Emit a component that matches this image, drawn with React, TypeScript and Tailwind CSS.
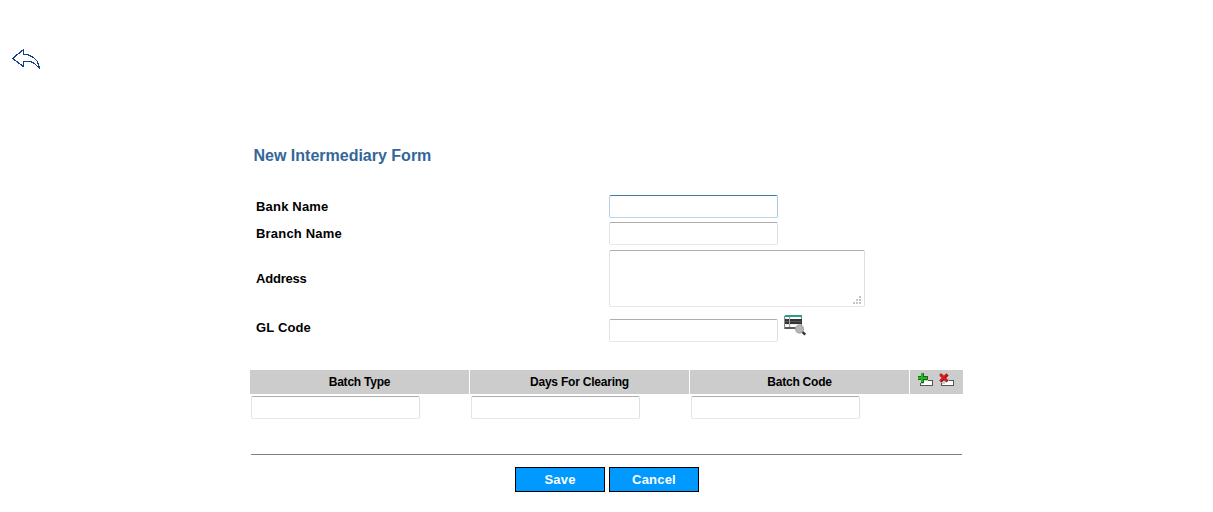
import { useState } from "react";

const field =
  "block rounded-[2px] border border-t-[#abadb3] border-r-[#dbdfe6] border-b-[#e3e9ef] border-l-[#e2e3ea] bg-white px-1 text-[13px] outline-none focus:border-t-[#3d7bad] focus:border-r-[#a4c9e3] focus:border-b-[#b7d9ed] focus:border-l-[#b5cfe7]";
const focusedField =
  "block rounded-[2px] border border-t-[#3d7bad] border-r-[#a4c9e3] border-b-[#b7d9ed] border-l-[#b5cfe7] bg-white px-1 text-[13px] outline-none";
const label = "w-[353px] shrink-0 text-[13px] leading-[15px]";
const button =
  "h-[25px] w-[90px] border border-black bg-[#0099ff] text-[13px] leading-[15px] font-bold tracking-[0.2px] text-white";

function BackIcon() {
  return (
    <svg width="30" height="22" viewBox="0 0 30 22" fill="none" stroke="#123f86" strokeWidth="1.2" shapeRendering="crispEdges">
      <path d="M1.5 10.5 L12.5 1.5 V6.5 H16.5 L22.5 9.5 L26.5 13.5 L28.5 20.5 L23.5 15.5 L19.5 13.5 H12.5 V18.5 Z" />
    </svg>
  );
}

function LookupIcon() {
  return (
    <svg width="23" height="21" viewBox="0 0 23 21">
      <path d="M0 1h18v13H0z" fill="#8a8a8a" />
      <path d="M1 2h16v11H1z" fill="#eee" />
      <path d="M1 0h17v2H1z" fill="#279b94" />
      <path d="M1 4h17v5H1z" fill="#353535" />
      <path d="M1 6h16v1H1z" fill="#555" />
      <path d="M2 2h3v2H2zM7 2h9v2H7zM2 10h3v2H2zM7 10h7v2H7z" fill="#fff" />
      <path d="M5 2h1v11H5z" fill="#a5a5a5" />
      <path d="M1 12h12v2H1z" fill="#5b5b5b" />
      <path d="m18 16.5 3.2 3.2" stroke="#303030" strokeWidth="2.4" />
      <circle cx="15.5" cy="14" r="4.2" fill="#b5b5b5" stroke="#999" strokeWidth="0.8" />
    </svg>
  );
}

function RowIcon({ remove = false }: { remove?: boolean }) {
  return (
    <svg width="16" height="14" viewBox="0 0 16 14" shapeRendering="crispEdges">
      <path d="M6 8h8v4H6zM3 11h3v1H3z" fill="#fff" />
      <path d="M2 10h1v3H2zM2 12h3v1H2zM10 7h5v1h-5zM14 7h1v5h-1zM5 12h10v1H5z" fill="#555" />
      <path d="M6 11h8v1H6z" fill="#fff" />
      {remove ? (
        <g shapeRendering="auto">
          <path d="m1.5 1.5 7 7m0-7-7 7" stroke="#8b1010" strokeWidth="3" />
          <path d="m1 1 7 7m0-7-7 7" stroke="#dc1d1d" strokeWidth="1.8" />
        </g>
      ) : (
        <g>
          <path d="M3 0h3v3h4v4H6v3H3V7H0V3h3z" fill="#136d13" />
          <path d="M3 0h2v4h4v2H5v3H3V6H0V4h3z" fill="#23b523" />
        </g>
      )}
    </svg>
  );
}

export default function App() {
  const [rows] = useState(1);
  return (
    <main className="h-[512px] w-full overflow-hidden bg-white pt-[48px] font-['Liberation_Sans',Arial,sans-serif] text-black">
      <button aria-label="Back" className="ml-[11px] block h-[22px]"><BackIcon /></button>
      <form className="ml-[250px] w-[713px] pt-[76px] font-bold" onSubmit={(e) => e.preventDefault()}>
        <h1 className="ml-[3.5px] h-[49px] text-[16px] leading-[19px] text-[#336699]">New Intermediary Form</h1>
        <div className="ml-[6px] flex h-[27px] items-start">
          <label htmlFor="bank" className={`${label} pt-[4px] tracking-[0.19px]`}>Bank Name</label>
          <input id="bank" className={`${focusedField} h-[23px] w-[169px]`} />
        </div>
        <div className="ml-[6px] flex h-[28px] items-start">
          <label htmlFor="branch" className={`${label} pt-[4px] tracking-[0.19px]`}>Branch Name</label>
          <input id="branch" className={`${field} h-[23px] w-[169px]`} />
        </div>
        <div className="ml-[6px] flex h-[65px] items-start">
          <label htmlFor="address" className={`${label} pt-[21px] tracking-[-0.2px]`}>Address</label>
          <div className="relative">
            <textarea id="address" className={`${field} h-[57px] w-[256px] resize-none`} />
            <svg className="pointer-events-none absolute right-[3px] bottom-[2px]" width="9" height="9" viewBox="0 0 9 9" shapeRendering="crispEdges">
              <path d="M6 0h2v2H6zM3 3h2v2H3zM6 3h2v2H6zM0 6h2v2H0zM3 6h2v2H3zM6 6h2v2H6z" fill="#c5c5c5" />
            </svg>
          </div>
        </div>
        <div className="ml-[6px] flex h-[55px] items-start">
          <label htmlFor="gl" className={`${label} pt-[5px] tracking-[0.15px]`}>GL Code</label>
          <input id="gl" className={`${field} mt-[4px] h-[23px] w-[169px]`} />
          <button type="button" aria-label="Find GL code" className="ml-[6px]"><LookupIcon /></button>
        </div>
        <div className="grid h-[24px] grid-cols-[219px_219px_219px_53px] gap-x-px text-center text-[12px] leading-[24px] tracking-[-0.22px]">
          <div className="bg-[#cccccc]">Batch Type</div>
          <div className="bg-[#cccccc]">Days For Clearing</div>
          <div className="bg-[#cccccc]">Batch Code</div>
          <div className="flex gap-[5px] bg-[#cccccc] pt-[3px] pl-[8px]">
            <button type="button" aria-label="Add row" className="h-[14px]"><RowIcon /></button>
            <button type="button" aria-label="Delete row" className="h-[14px]"><RowIcon remove /></button>
          </div>
        </div>
        {Array.from({ length: rows }, (_, i) => (
          <div key={i} className="ml-px grid grid-cols-[220px_220px_220px] pt-[2px]">
            <input aria-label="Batch Type" className={`${field} h-[23px] w-[169px]`} />
            <input aria-label="Days For Clearing" className={`${field} h-[23px] w-[169px]`} />
            <input aria-label="Batch Code" className={`${field} h-[23px] w-[169px]`} />
          </div>
        ))}
        <div className="mt-[35px] ml-px h-px w-[711px] bg-[#808080]" />
        <div className="mt-[12px] flex gap-[4px] pl-[265px]">
          <button type="submit" className={button}>Save</button>
          <button type="button" className={button}>Cancel</button>
        </div>
      </form>
    </main>
  );
}
